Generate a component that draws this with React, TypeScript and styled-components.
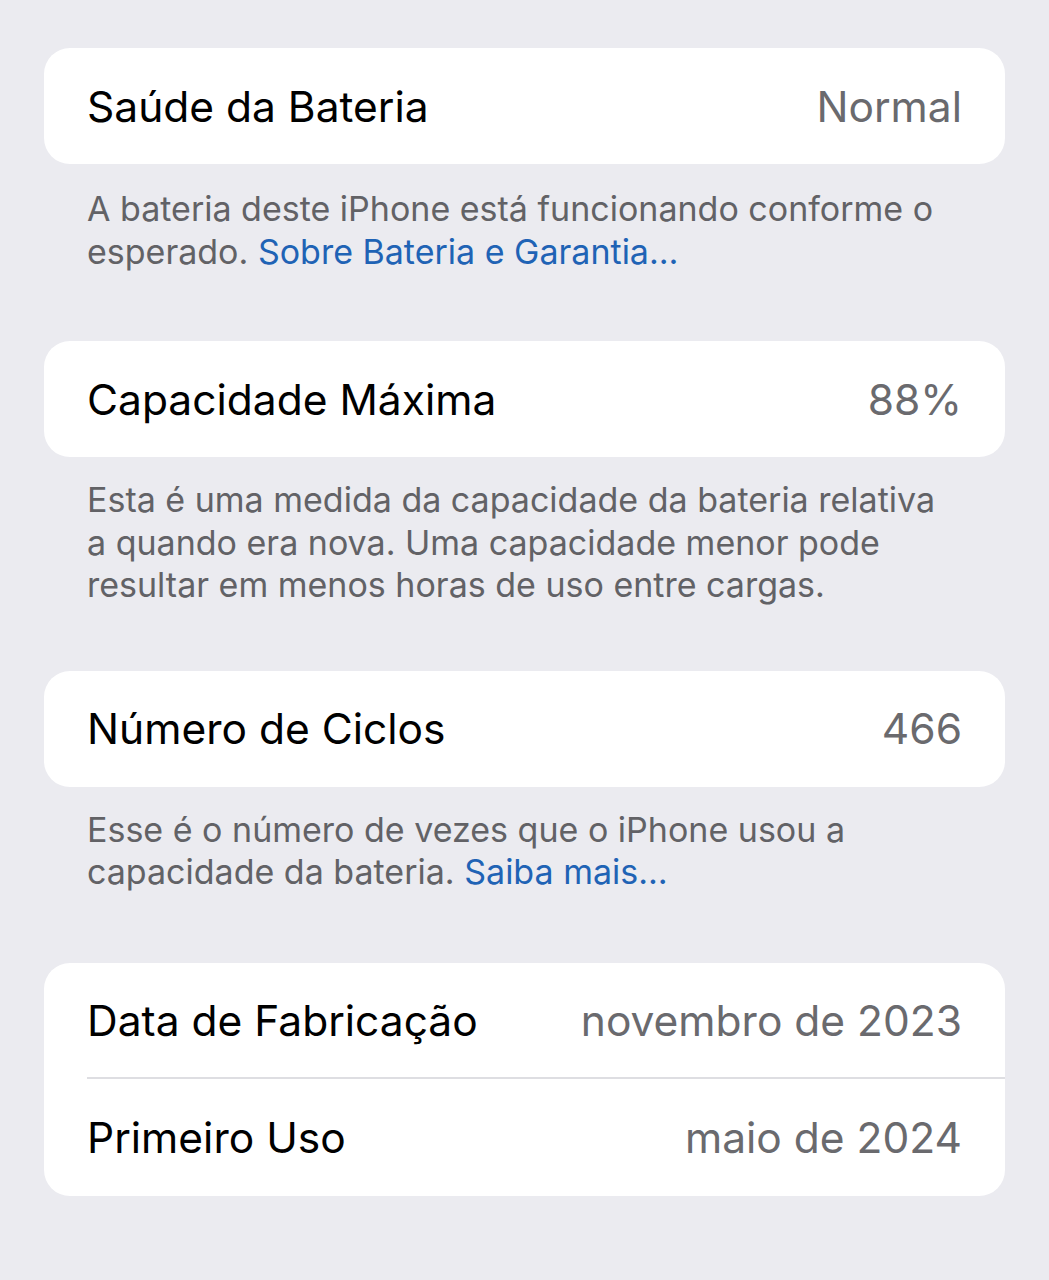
import React from "react";
import styled, { createGlobalStyle } from "styled-components";

const Global = createGlobalStyle`
  html, body { margin: 0; padding: 0; background: #ebebf0; }
  body { font-family: Inter, "Noto Sans", sans-serif; -webkit-font-smoothing: antialiased; }
`;

const Page = styled.div`
  background: #ebebf0;
  min-height: 1280px;
  padding: 48px 44px 0 44px;
  box-sizing: border-box;
`;

const Section = styled.section`
  display: flex;
  flex-direction: column;
`;

const Card = styled.div`
  background: #ffffff;
  border-radius: 26px;
  overflow: hidden;
`;

const Row = styled.div<{ $divider?: boolean; $height?: number }>`
  display: flex;
  align-items: center;
  justify-content: space-between;
  height: ${(p) => p.$height ?? 116}px;
  padding: 0 43px;
  box-sizing: border-box;
  position: relative;
  &::after {
    content: "";
    display: ${(p) => (p.$divider ? "block" : "none")};
    position: absolute;
    left: 43px;
    right: 0;
    bottom: 0;
    height: 2px;
    background: #dedee2;
  }
`;

const Label = styled.span`
  font-size: 42.5px;
  color: #000;
`;

const Value = styled.span`
  font-size: 42.5px;
  color: #6a6a6e;
`;

const Footer = styled.p<{ $top: number; $bottom: number }>`
  margin: 0;
  padding: ${(p) => p.$top}px 60px ${(p) => p.$bottom}px 43px;
  font-size: 34px;
  line-height: 42.5px;
  color: #626266;
`;

const Link = styled.span`
  color: #1f63b5;
`;

export default function App() {
  return (
    <>
      <Global />
      <Page>
        <Section>
          <Card>
            <Row>
              <Label>Saúde da Bateria</Label>
              <Value>Normal</Value>
            </Row>
          </Card>
          <Footer $top={24} $bottom={68}>
            A bateria deste iPhone está funcionando conforme o esperado.{" "}
            <Link>Sobre Bateria e Garantia…</Link>
          </Footer>
        </Section>
        <Section>
          <Card>
            <Row>
              <Label>Capacidade Máxima</Label>
              <Value>88%</Value>
            </Row>
          </Card>
          <Footer $top={22} $bottom={64}>
            Esta é uma medida da capacidade da bateria relativa a quando era nova. Uma capacidade menor pode resultar em menos horas de uso entre cargas.
          </Footer>
        </Section>
        <Section>
          <Card>
            <Row>
              <Label>Número de Ciclos</Label>
              <Value>466</Value>
            </Row>
          </Card>
          <Footer $top={22} $bottom={69}>
            Esse é o número de vezes que o iPhone usou a capacidade da bateria.{" "}
            <Link>Saiba mais…</Link>
          </Footer>
        </Section>
        <Section>
          <Card>
            <Row $divider>
              <Label>Data de Fabricação</Label>
              <Value>novembro de 2023</Value>
            </Row>
            <Row $height={117}>
              <Label>Primeiro Uso</Label>
              <Value>maio de 2024</Value>
            </Row>
          </Card>
        </Section>
      </Page>
    </>
  );
}
